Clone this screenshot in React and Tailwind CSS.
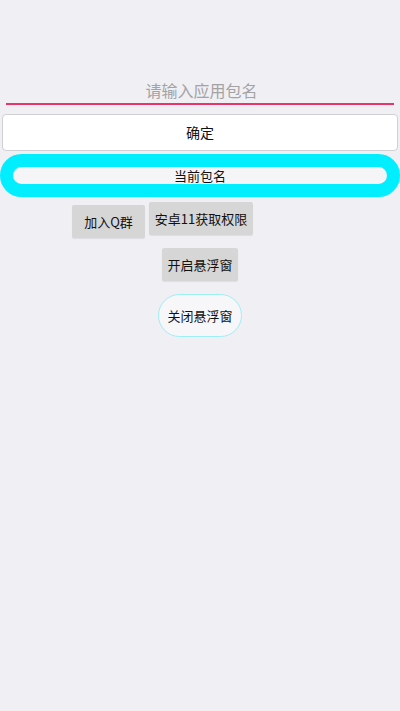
import React from "react";

export default function App() {
  const font = { fontFamily: '"Noto Sans CJK SC", "Noto Sans", Roboto, sans-serif' };
  return (
    <div className="w-[400px] h-[711px] bg-[#f0eff4] flex flex-col text-[#1a1a1a]" style={font}>
      <div className="mt-[78px] mx-[6px] h-[27px] border-b-2 border-[#e8336b] flex items-center justify-center text-[16px] leading-none text-[#a3a3a3] pb-[2px] pl-[3px]">
        请输入应用包名
      </div>
      <button className="mt-[9px] mx-[2px] h-[37px] bg-white border border-[#cfcfd4] rounded-[4px] text-[14px] text-[#111] flex items-center justify-center">
        确定
      </button>
      <div className="mt-[3px] h-[43px] w-[400px] border-[13px] border-[#00eeff] rounded-full bg-[#f5f5f8] flex items-center justify-center text-[13px] leading-none text-[#111]">
        当前包名
      </div>
      <div className="mt-[5px] pl-[72px] flex items-start gap-[4px]">
        <button className="mt-[3px] w-[73px] h-[33px] bg-[#d6d6d6] rounded-[2px] text-[13px] text-[#111] flex items-center justify-center shadow-[0_1px_1px_rgba(0,0,0,0.08)]">
          加入Q群
        </button>
        <button className="w-[104px] h-[33px] bg-[#d6d6d6] rounded-[2px] text-[13px] text-[#111] flex items-center justify-center shadow-[0_1px_1px_rgba(0,0,0,0.08)]">
          安卓11获取权限
        </button>
      </div>
      <div className="mt-[10px] flex justify-center">
        <button className="w-[76px] h-[33px] bg-[#d6d6d6] rounded-[2px] text-[13px] text-[#111] flex items-center justify-center shadow-[0_1px_1px_rgba(0,0,0,0.08)]">
          开启悬浮窗
        </button>
      </div>
      <div className="mt-[13px] flex justify-center">
        <button className="w-[84px] h-[43px] bg-[#f7f7fa] border border-[#9eeef5] rounded-[22px] text-[13px] text-[#111] flex items-center justify-center">
          关闭悬浮窗
        </button>
      </div>
    </div>
  );
}
